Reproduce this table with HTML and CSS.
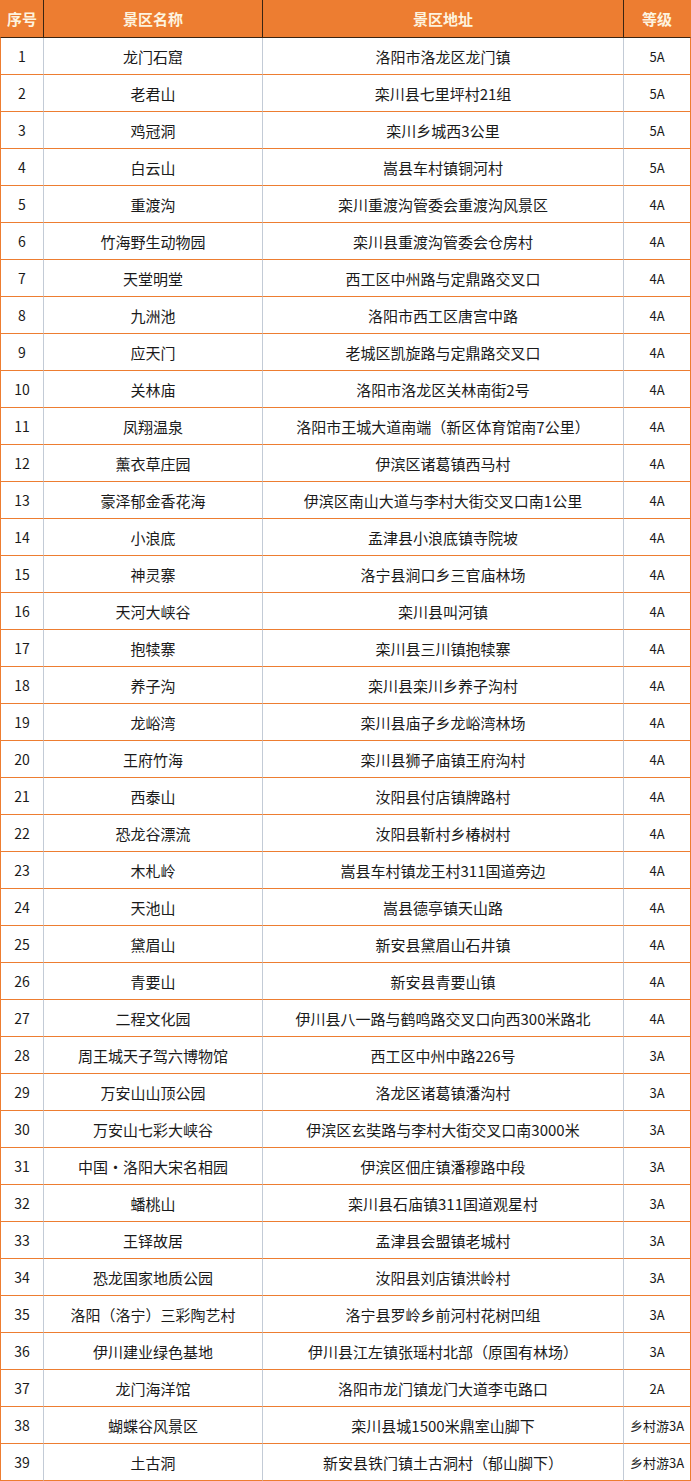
FILE: index.html
```html
<!DOCTYPE html>
<html lang="zh-CN">
<head>
<meta charset="utf-8">
<title>洛阳景区</title>
<link rel="stylesheet" href="styles.css">
</head>
<body>
<div class="sheet">
  <div class="row head">
    <div class="c c1">序号</div><div class="c c2">景区名称</div><div class="c c3">景区地址</div><div class="c c4">等级</div>
  </div>
  <div class="row"><div class="c c1">1</div><div class="c c2">龙门石窟</div><div class="c c3">洛阳市洛龙区龙门镇</div><div class="c c4 g">5A</div></div>
  <div class="row"><div class="c c1">2</div><div class="c c2">老君山</div><div class="c c3">栾川县七里坪村21组</div><div class="c c4 g">5A</div></div>
  <div class="row"><div class="c c1">3</div><div class="c c2">鸡冠洞</div><div class="c c3">栾川乡城西3公里</div><div class="c c4 g">5A</div></div>
  <div class="row"><div class="c c1">4</div><div class="c c2">白云山</div><div class="c c3">嵩县车村镇铜河村</div><div class="c c4 g">5A</div></div>
  <div class="row"><div class="c c1">5</div><div class="c c2">重渡沟</div><div class="c c3">栾川重渡沟管委会重渡沟风景区</div><div class="c c4 g">4A</div></div>
  <div class="row"><div class="c c1">6</div><div class="c c2">竹海野生动物园</div><div class="c c3">栾川县重渡沟管委会仓房村</div><div class="c c4 g">4A</div></div>
  <div class="row"><div class="c c1">7</div><div class="c c2">天堂明堂</div><div class="c c3">西工区中州路与定鼎路交叉口</div><div class="c c4 g">4A</div></div>
  <div class="row"><div class="c c1">8</div><div class="c c2">九洲池</div><div class="c c3">洛阳市西工区唐宫中路</div><div class="c c4 g">4A</div></div>
  <div class="row"><div class="c c1">9</div><div class="c c2">应天门</div><div class="c c3">老城区凯旋路与定鼎路交叉口</div><div class="c c4 g">4A</div></div>
  <div class="row"><div class="c c1">10</div><div class="c c2">关林庙</div><div class="c c3">洛阳市洛龙区关林南街2号</div><div class="c c4 g">4A</div></div>
  <div class="row"><div class="c c1">11</div><div class="c c2">凤翔温泉</div><div class="c c3">洛阳市王城大道南端（新区体育馆南7公里）</div><div class="c c4 g">4A</div></div>
  <div class="row"><div class="c c1">12</div><div class="c c2">薰衣草庄园</div><div class="c c3">伊滨区诸葛镇西马村</div><div class="c c4 g">4A</div></div>
  <div class="row"><div class="c c1">13</div><div class="c c2">豪泽郁金香花海</div><div class="c c3">伊滨区南山大道与李村大街交叉口南1公里</div><div class="c c4 g">4A</div></div>
  <div class="row"><div class="c c1">14</div><div class="c c2">小浪底</div><div class="c c3">孟津县小浪底镇寺院坡</div><div class="c c4 g">4A</div></div>
  <div class="row"><div class="c c1">15</div><div class="c c2">神灵寨</div><div class="c c3">洛宁县涧口乡三官庙林场</div><div class="c c4 g">4A</div></div>
  <div class="row"><div class="c c1">16</div><div class="c c2">天河大峡谷</div><div class="c c3">栾川县叫河镇</div><div class="c c4 g">4A</div></div>
  <div class="row"><div class="c c1">17</div><div class="c c2">抱犊寨</div><div class="c c3">栾川县三川镇抱犊寨</div><div class="c c4 g">4A</div></div>
  <div class="row"><div class="c c1">18</div><div class="c c2">养子沟</div><div class="c c3">栾川县栾川乡养子沟村</div><div class="c c4 g">4A</div></div>
  <div class="row"><div class="c c1">19</div><div class="c c2">龙峪湾</div><div class="c c3">栾川县庙子乡龙峪湾林场</div><div class="c c4 g">4A</div></div>
  <div class="row"><div class="c c1">20</div><div class="c c2">王府竹海</div><div class="c c3">栾川县狮子庙镇王府沟村</div><div class="c c4 g">4A</div></div>
  <div class="row"><div class="c c1">21</div><div class="c c2">西泰山</div><div class="c c3">汝阳县付店镇牌路村</div><div class="c c4 g">4A</div></div>
  <div class="row"><div class="c c1">22</div><div class="c c2">恐龙谷漂流</div><div class="c c3">汝阳县靳村乡椿树村</div><div class="c c4 g">4A</div></div>
  <div class="row"><div class="c c1">23</div><div class="c c2">木札岭</div><div class="c c3">嵩县车村镇龙王村311国道旁边</div><div class="c c4 g">4A</div></div>
  <div class="row"><div class="c c1">24</div><div class="c c2">天池山</div><div class="c c3">嵩县德亭镇天山路</div><div class="c c4 g">4A</div></div>
  <div class="row"><div class="c c1">25</div><div class="c c2">黛眉山</div><div class="c c3">新安县黛眉山石井镇</div><div class="c c4 g">4A</div></div>
  <div class="row"><div class="c c1">26</div><div class="c c2">青要山</div><div class="c c3">新安县青要山镇</div><div class="c c4 g">4A</div></div>
  <div class="row"><div class="c c1">27</div><div class="c c2">二程文化园</div><div class="c c3">伊川县八一路与鹤鸣路交叉口向西300米路北</div><div class="c c4 g">4A</div></div>
  <div class="row"><div class="c c1">28</div><div class="c c2">周王城天子驾六博物馆</div><div class="c c3">西工区中州中路226号</div><div class="c c4 g">3A</div></div>
  <div class="row"><div class="c c1">29</div><div class="c c2">万安山山顶公园</div><div class="c c3">洛龙区诸葛镇潘沟村</div><div class="c c4 g">3A</div></div>
  <div class="row"><div class="c c1">30</div><div class="c c2">万安山七彩大峡谷</div><div class="c c3">伊滨区玄奘路与李村大街交叉口南3000米</div><div class="c c4 g">3A</div></div>
  <div class="row"><div class="c c1">31</div><div class="c c2">中国·洛阳大宋名相园</div><div class="c c3">伊滨区佃庄镇潘穆路中段</div><div class="c c4 g">3A</div></div>
  <div class="row"><div class="c c1">32</div><div class="c c2">蟠桃山</div><div class="c c3">栾川县石庙镇311国道观星村</div><div class="c c4 g">3A</div></div>
  <div class="row"><div class="c c1">33</div><div class="c c2">王铎故居</div><div class="c c3">孟津县会盟镇老城村</div><div class="c c4 g">3A</div></div>
  <div class="row"><div class="c c1">34</div><div class="c c2">恐龙国家地质公园</div><div class="c c3">汝阳县刘店镇洪岭村</div><div class="c c4 g">3A</div></div>
  <div class="row"><div class="c c1">35</div><div class="c c2">洛阳（洛宁）三彩陶艺村</div><div class="c c3">洛宁县罗岭乡前河村花树凹组</div><div class="c c4 g">3A</div></div>
  <div class="row"><div class="c c1">36</div><div class="c c2">伊川建业绿色基地</div><div class="c c3">伊川县江左镇张瑶村北部（原国有林场）</div><div class="c c4 g">3A</div></div>
  <div class="row"><div class="c c1">37</div><div class="c c2">龙门海洋馆</div><div class="c c3">洛阳市龙门镇龙门大道李屯路口</div><div class="c c4 g">2A</div></div>
  <div class="row"><div class="c c1">38</div><div class="c c2">蝴蝶谷风景区</div><div class="c c3">栾川县城1500米鼎室山脚下</div><div class="c c4 g">乡村游3A</div></div>
  <div class="row"><div class="c c1">39</div><div class="c c2">土古洞</div><div class="c c3">新安县铁门镇土古洞村（郁山脚下）</div><div class="c c4 g">乡村游3A</div></div>
</div>
</body>
</html>
```

FILE: styles.css
```css
html, body {
  margin: 0;
  padding: 0;
  background: #ffffff;
}
.sheet {
  width: 691px;
  font-family: "Noto Sans CJK SC", "Noto Sans", sans-serif;
  font-size: 15px;
  color: #1a1a1a;
}
.row {
  display: grid;
  grid-template-columns: 44px 219px 361px 67px;
  height: 37px;
}
.c {
  box-sizing: border-box;
  height: 37px;
  display: flex;
  align-items: center;
  justify-content: center;
  white-space: nowrap;
  border-right: 1px solid #c3cbd6;
  border-bottom: 1px solid #ed7d31;
}
.c1 {
  border-left: 1px solid #ed7d31;
  font-size: 14px;
}
.c4 {
  border-right-color: #ed7d31;
}
.g {
  font-size: 13px;
}
.head {
  height: 38px;
  background: #ed7d31;
}
.head .c {
  height: 38px;
  background: #ed7d31;
  color: #fdf3df;
  font-weight: 700;
  font-size: 15px;
  border-right: 1px solid #3a2412;
  border-bottom: 1px solid #3a2412;
}
.head .c1 {
  border-left: 1px solid #ed7d31;
}
.head .c4 {
  border-right: 1px solid #ed7d31;
}
```
